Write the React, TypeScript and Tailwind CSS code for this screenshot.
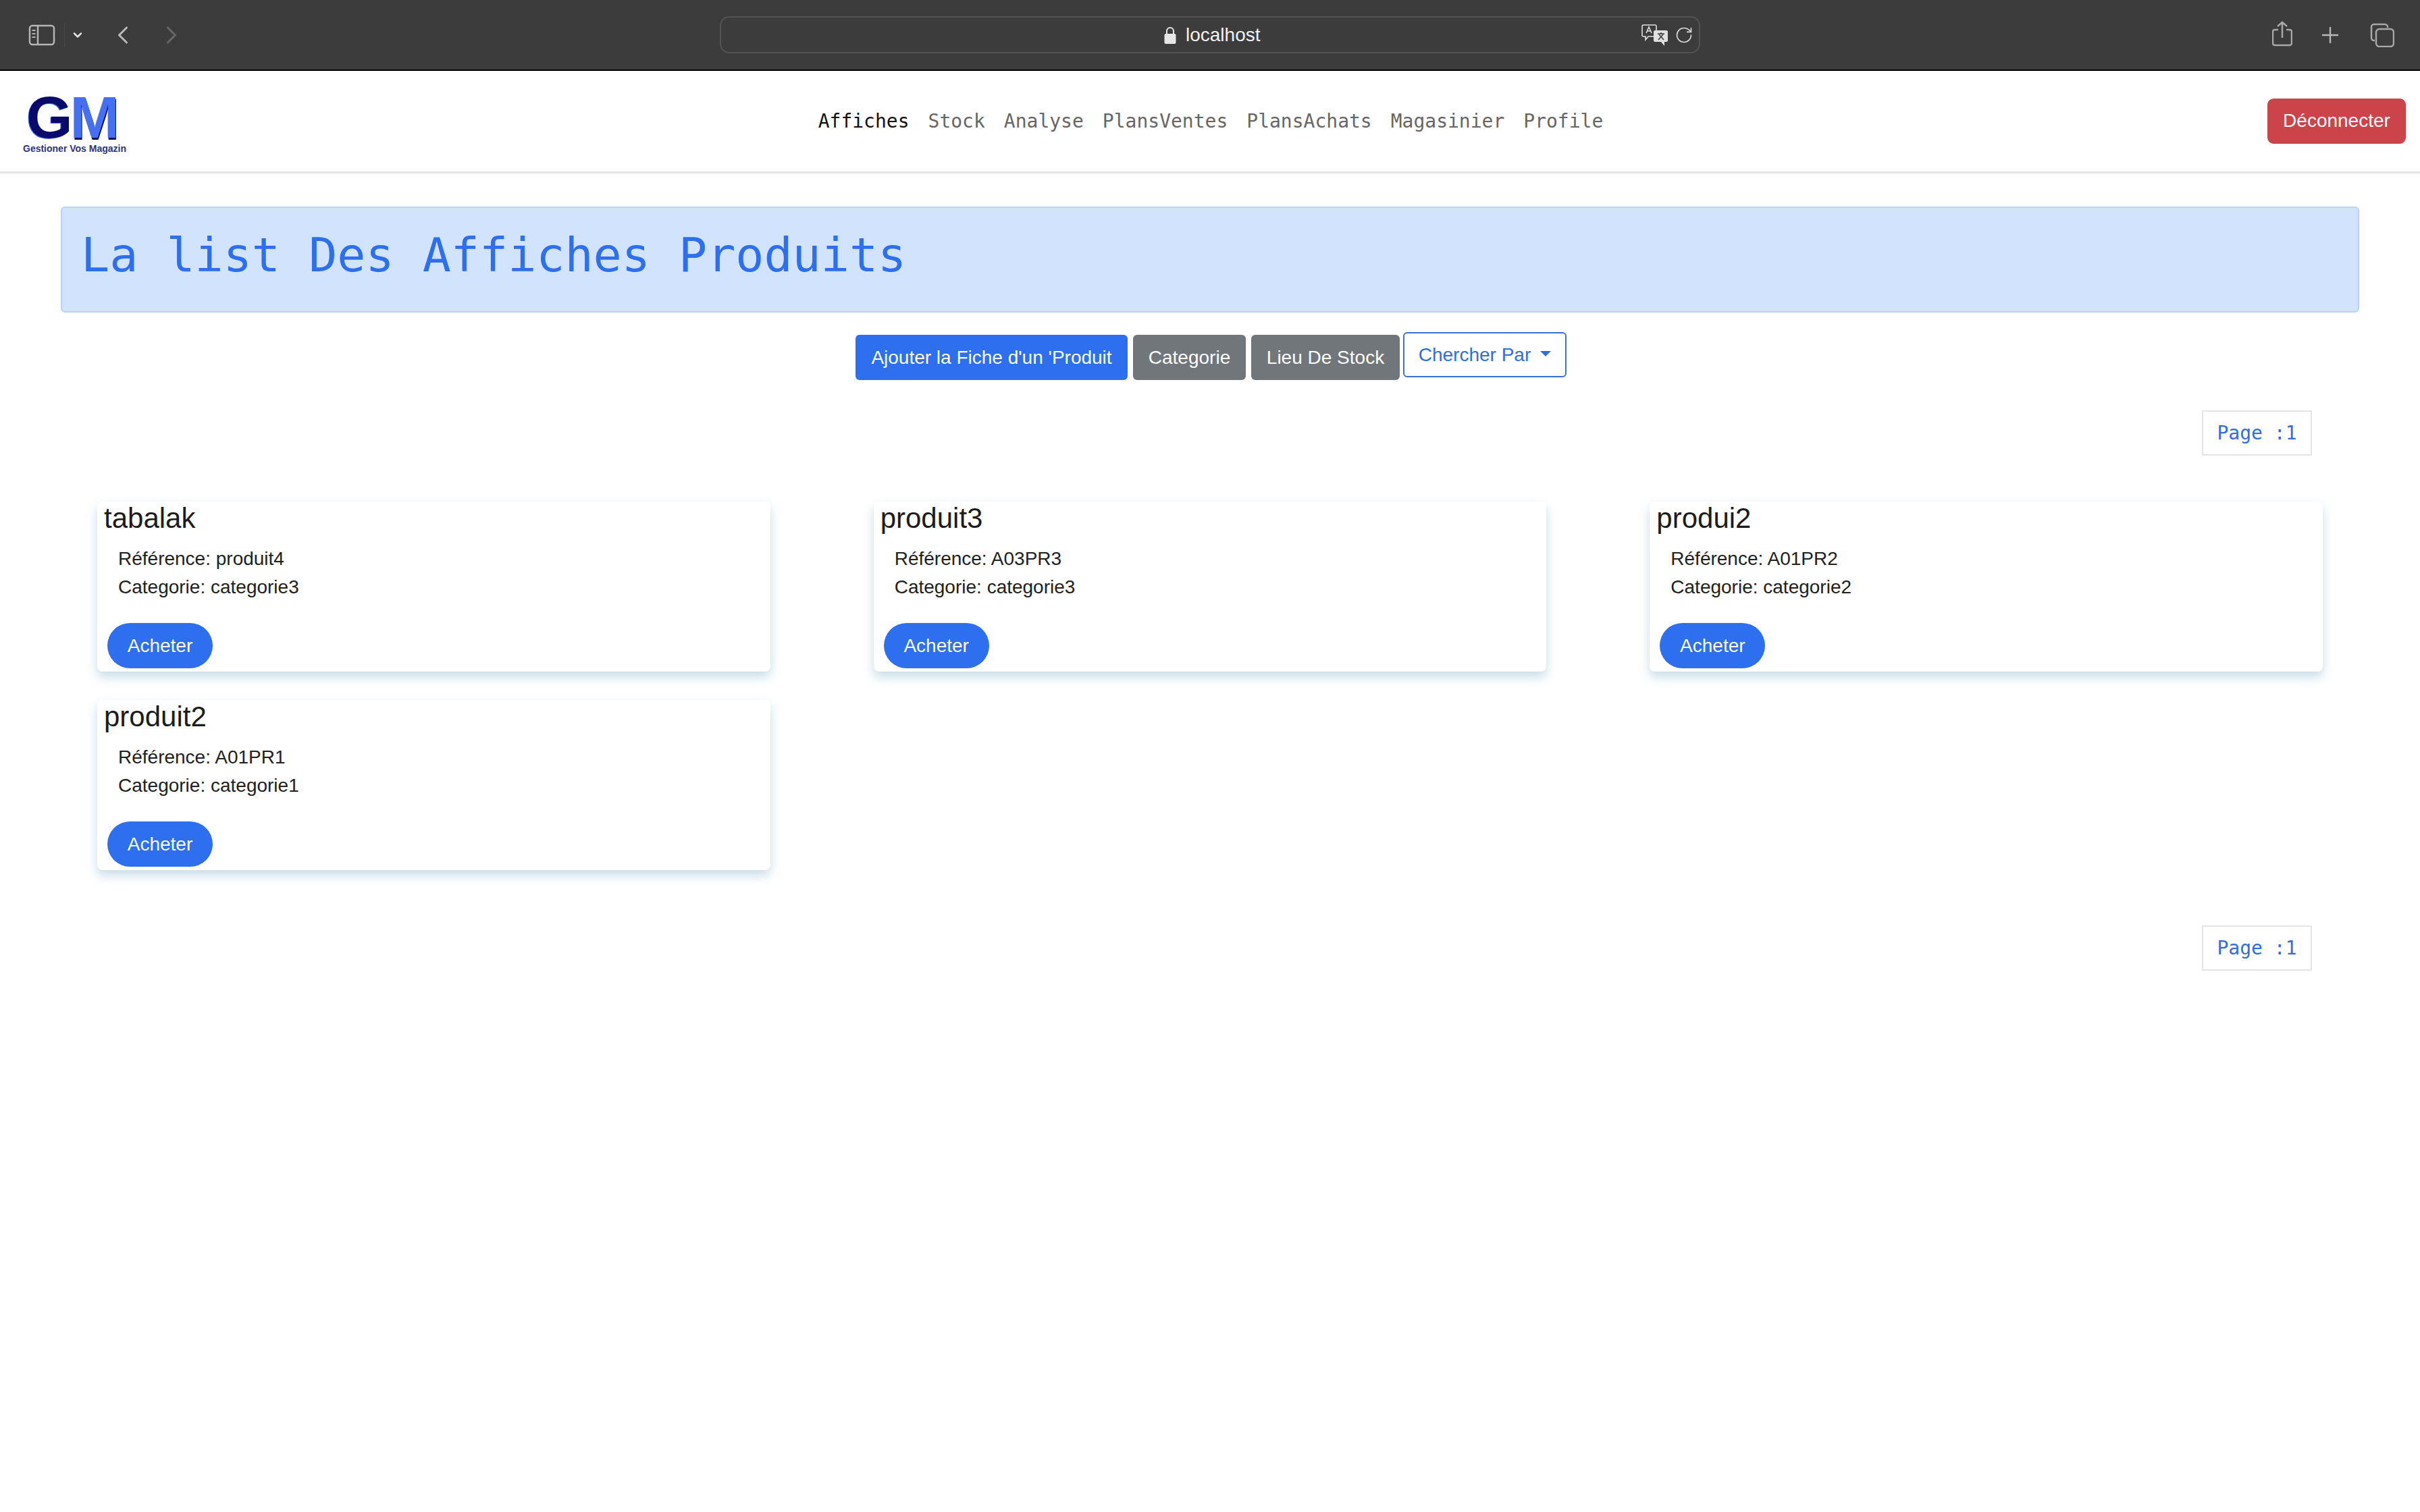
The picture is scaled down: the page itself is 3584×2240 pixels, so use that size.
import React from "react";
import { ChevronDown, ChevronLeft, ChevronRight, Plus, RotateCw } from "lucide-react";

const sans = "font-['Liberation_Sans',Arial,sans-serif]";
const mono = "font-['DejaVu_Sans_Mono',monospace]";

const navLinks = ["Affiches", "Stock", "Analyse", "PlansVentes", "PlansAchats", "Magasinier", "Profile"];

const products = [
	{ name: "tabalak", ref: "produit4", cat: "categorie3" },
	{ name: "produit3", ref: "A03PR3", cat: "categorie3" },
	{ name: "produi2", ref: "A01PR2", cat: "categorie2" },
	{ name: "produit2", ref: "A01PR1", cat: "categorie1" },
];

function BrowserBar() {
	return (
		<div className="flex h-[105px] items-center border-b-2 border-black bg-[#3c3c3c]">
			<div className="flex w-[1066px] items-center pl-[42px]">
				<svg width="40" height="32" viewBox="0 0 40 32" fill="none" stroke="#b4b4b4" strokeWidth="2.5">
					<rect x="2" y="2" width="36" height="28" rx="4" />
					<path d="M14 2v28" />
					<path d="M5.5 9h5M5.5 14h5M5.5 19h5" strokeWidth="2" />
				</svg>
				<div className="ml-[13px] h-[36px] w-px bg-[#4a4a4a]" />
				<ChevronDown className="ml-[9px] text-[#e0e0e0]" size={20} strokeWidth={3} />
				<ChevronLeft className="ml-[35px] text-[#b8b8b8]" size={44} strokeWidth={1.7} />
				<ChevronRight className="ml-[28px] text-[#666666]" size={44} strokeWidth={1.7} />
			</div>
			<div className="flex h-[55px] w-[1452px] items-center rounded-[14px] border-2 border-[#525252]">
				<div className="flex w-[688px] items-center justify-end pr-[14px]">
					<svg width="18" height="26" viewBox="0 0 18 26" fill="none">
						<path d="M4 12V7a5 5 0 0 1 10 0v5" stroke="#e6e6e6" strokeWidth="2" />
						<rect x="0.5" y="11" width="17" height="15" rx="2" fill="#e6e6e6" />
					</svg>
				</div>
				<span className={`${sans} w-[110px] text-[28px] leading-none text-[#f2f2f2]`}>localhost</span>
				<div className="flex flex-1 items-center justify-end pr-[8px]">
					<svg width="40" height="34" viewBox="0 0 40 34" fill="none" stroke="#e0e0e0" strokeWidth="1.6">
						<path d="M3 2h17a2 2 0 0 1 2 2v13a2 2 0 0 1-2 2H10l-4 5v-5H3a2 2 0 0 1-2-2V4a2 2 0 0 1 2-2z" />
						<path d="M7 14l4-9 4 9M8.5 11h5" />
						<path
							d="M20 10h17a2 2 0 0 1 2 2v13a2 2 0 0 1-2 2h-3v6l-5-6h-9a2 2 0 0 1-2-2V12a2 2 0 0 1 2-2z"
							fill="#e0e0e0"
							stroke="none"
						/>
						<path d="M24 15h10M29 13v2M33 24l-7-8M25 24l7-8" stroke="#3c3c3c" />
					</svg>
					<RotateCw className="ml-[9px] text-[#d8d8d8]" size={28} strokeWidth={1.4} />
				</div>
			</div>
			<div className="flex flex-1 items-center justify-end pr-[38px]">
				<svg className="mb-[3px]" width="30" height="38" viewBox="0 0 30 38" fill="none" stroke="#a8a8a8" strokeWidth="2.5">
					<path d="M9 13H4a3 3 0 0 0-3 3v17a3 3 0 0 0 3 3h22a3 3 0 0 0 3-3V16a3 3 0 0 0-3-3h-5" />
					<path d="M15 25V2M8 8l7-6 7 6" />
				</svg>
				<Plus className="ml-[37px] text-[#b8b8b8]" size={38} strokeWidth={1.5} />
				<svg className="ml-[40px]" width="36" height="36" viewBox="0 0 36 36" fill="none" stroke="#a8a8a8" strokeWidth="2.5">
					<path d="M7 26H6a4 4 0 0 1-4-4V6a4 4 0 0 1 4-4h16a4 4 0 0 1 4 4v1" />
					<rect x="9" y="9" width="26" height="26" rx="5" />
				</svg>
			</div>
		</div>
	);
}

function Logo() {
	return (
		<div className="flex w-[400px] flex-col pl-[34px] pt-[11px]">
			<div className={`${sans} flex h-[62px] items-center pl-[5px] text-[88px] font-bold leading-[62px] tracking-[-4px]`}>
				<span className="text-[#0a0a6a] [text-shadow:-1px_1px_0_#4670f2]">G</span>
				<span className="text-[#4670f2] [text-shadow:1px_3px_0_#0a0a6a]">M</span>
			</div>
			<span className={`${sans} mt-[8px] whitespace-nowrap text-[14px] font-bold leading-[14px] text-[#2c3480]`}>
				Gestioner Vos Magazin
			</span>
		</div>
	);
}

function Navbar() {
	return (
		<div className="flex h-[152px] items-center border-b-[3px] border-[#e6e6e6] bg-white">
			<Logo />
			<nav className={`${mono} flex flex-1 justify-center gap-[28px] pl-[2px] text-[28px] leading-none`}>
				{navLinks.map((link, i) => (
					<span key={link} className={i === 0 ? "text-[#111111]" : "text-[#666666]"}>
						{link}
					</span>
				))}
			</nav>
			<div className="flex w-[400px] justify-end pr-[21px]">
				<button
					className={`${sans} flex h-[67px] w-[205px] items-center justify-center rounded-[9px] bg-[#cb444a] pb-[1px] text-[28px] text-white`}
				>
					Déconnecter
				</button>
			</div>
		</div>
	);
}

function PageTag() {
	return (
		<div className="flex justify-end pr-[160px]">
			<span
				className={`${mono} flex h-[67px] w-[163px] items-center justify-center border-2 border-[#e4e4e4] text-[28px] text-[#2d6fe0]`}
			>
				Page :1
			</span>
		</div>
	);
}

function ProductCard({ name, ref: reference, cat }: { name: string; ref: string; cat: string }) {
	return (
		<div className={`${sans} h-[252px] rounded-[8px] bg-white pl-[10px] pt-[1px] shadow-[0_8px_16px_rgba(95,155,185,0.35)]`}>
			<h5 className="text-[42px] leading-[48px] text-[#1c1c1c]">{name}</h5>
			<div className="mt-[15px] pl-[21px] text-[28px] leading-[42px] text-[#212121]">
				<p>Référence: {reference}</p>
				<p>Categorie: {cat}</p>
			</div>
			<button className="ml-[5px] mt-[32px] h-[67px] w-[156px] rounded-full bg-[#2d6fef] text-[28px] text-white">
				Acheter
			</button>
		</div>
	);
}

export default function App() {
	return (
		<div className="min-h-[2240px] bg-white">
			<BrowserBar />
			<Navbar />
			<main className="pt-[49px]">
				<div className="mx-[90px] flex h-[157px] rounded-[6px] border-2 border-[#b6d4fc] bg-[#d1e3fd] pl-[28px] pt-[28px]">
					<h1 className={`${mono} text-[70px] leading-[84px] text-[#2d6fef]`}>La list Des Affiches Produits</h1>
				</div>
				<div className={`${sans} mt-[29px] flex justify-center pl-[3px] text-[28px] text-white`}>
					<button className="mt-[4px] h-[67px] w-[403px] rounded-[6px] bg-[#2d6fef]">Ajouter la Fiche d'un 'Produit</button>
					<button className="ml-[8px] mt-[4px] h-[67px] w-[167px] rounded-[6px] bg-[#70767a]">Categorie</button>
					<button className="ml-[8px] mt-[4px] h-[67px] w-[220px] rounded-[6px] bg-[#70767a]">Lieu De Stock</button>
					<button className="ml-[5px] flex h-[67px] w-[242px] items-center justify-center gap-[14px] rounded-[6px] border-2 border-[#3c6fd8] text-[#2d6fe0]">
						Chercher Par
						<span className="mb-[4px] border-x-[8px] border-t-[8px] border-x-transparent border-t-[#2d6fe0]" />
					</button>
				</div>
				<div className="mt-[45px]">
					<PageTag />
				</div>
				<div className="mt-[68px] grid grid-cols-3 gap-x-[153px] gap-y-[42px] px-[144px]">
					{products.map((p) => (
						<ProductCard key={p.name} name={p.name} ref={p.ref} cat={p.cat} />
					))}
				</div>
				<div className="mt-[82px]">
					<PageTag />
				</div>
			</main>
		</div>
	);
}
